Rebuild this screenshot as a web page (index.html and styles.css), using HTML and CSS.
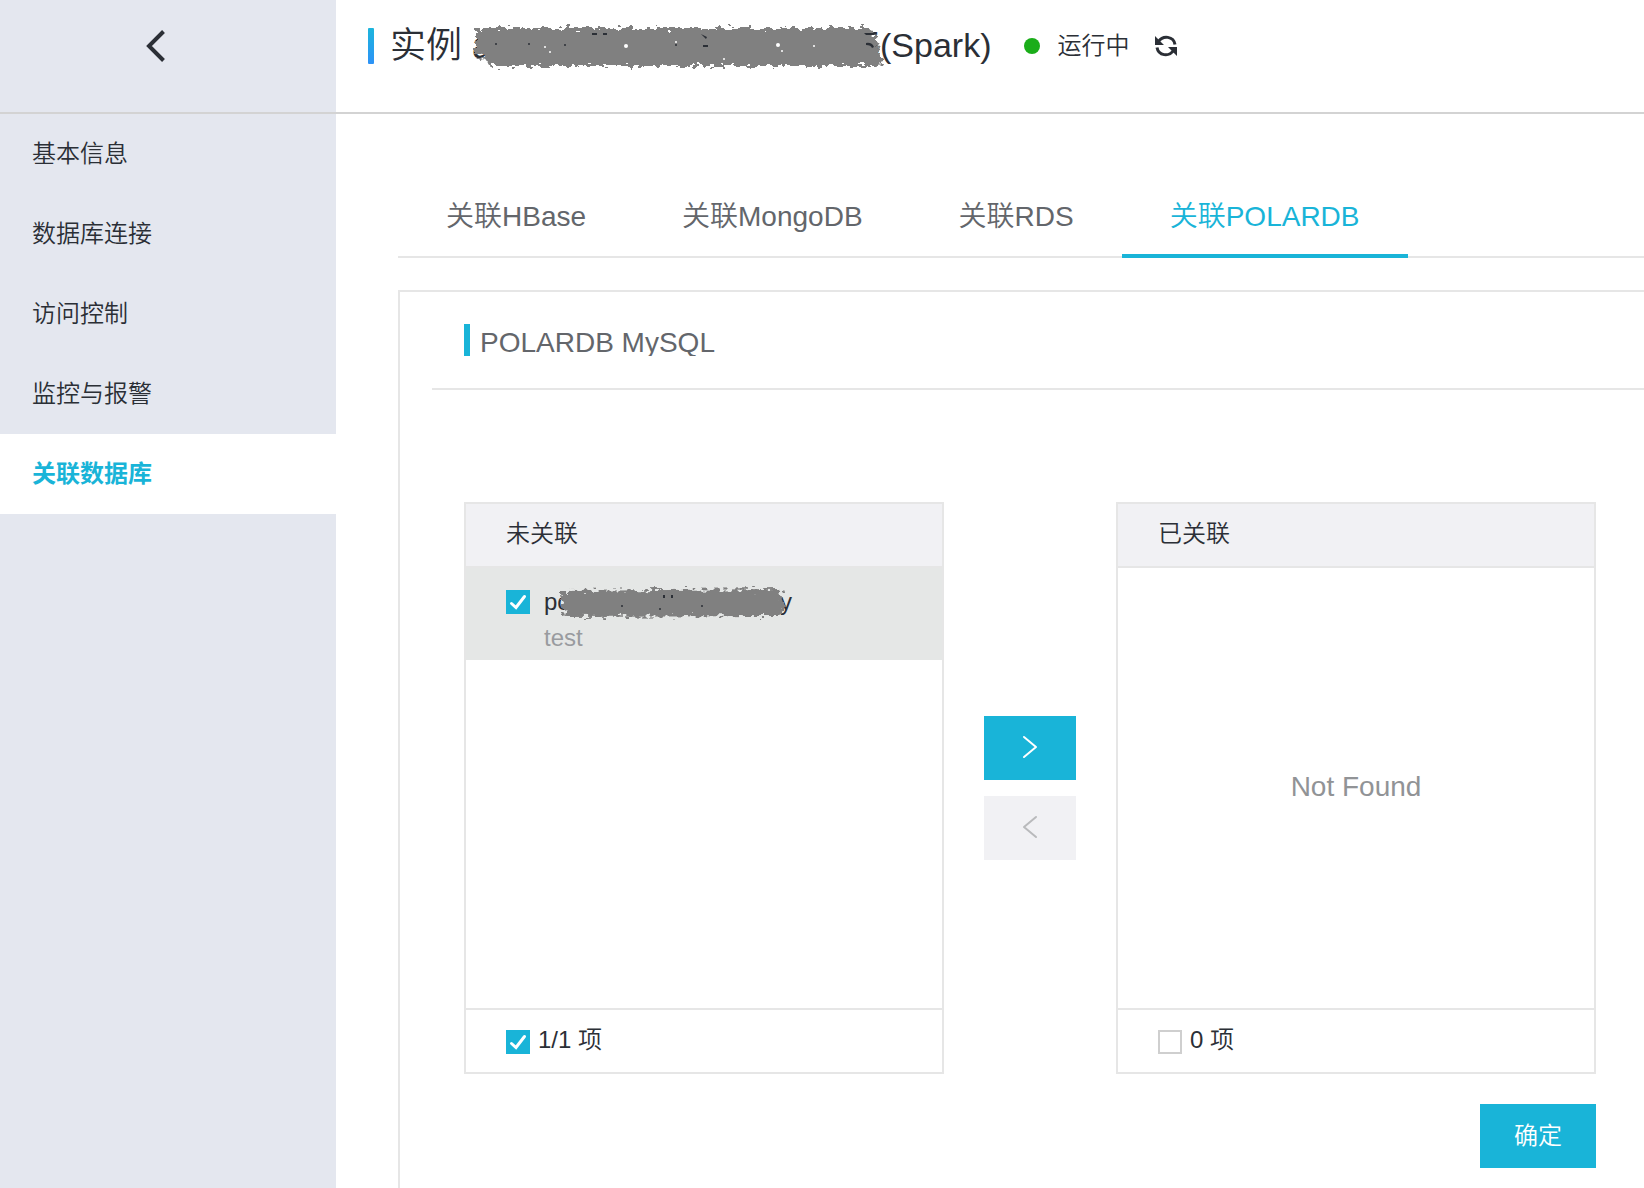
FILE: index.html
```html
<!DOCTYPE html>
<html lang="zh-CN">
<head>
<meta charset="utf-8">
<title>关联数据库</title>
<link rel="stylesheet" href="styles.css">
</head>
<body>
<div class="page">
  <header class="topbar">
    <div class="topbar-back">
      <button class="back" type="button" aria-label="返回">
        <svg width="22" height="34" viewBox="0 0 22 34"><path d="M18.5 2.5 4 17l14.500 14.500" fill="none" stroke="#2b2f36" stroke-width="4"/></svg>
      </button>
    </div>
    <div class="topbar-main">
      <span class="accent"></span>
      <h1 class="title">
        <span>实例</span>
        <span class="masked masked-title">
          <span>a</span><span>5</span>
          <svg class="scribble" viewBox="0 0 416 48" aria-hidden="true">
            <defs>
              <filter id="rough" x="-5%" y="-20%" width="110%" height="140%">
                <feTurbulence type="fractalNoise" baseFrequency="0.16 0.26" numOctaves="2" seed="4" result="noise"/>
                <feDisplacementMap in="SourceGraphic" in2="noise" scale="13" xChannelSelector="R" yChannelSelector="G"/>
              </filter>
            </defs>
            <path filter="url(#rough)" fill="#808080" d="M3 5 398 5 404 16 412 42 404 43 18 43 12 34 3 32Z"/>
            <g fill="#fff"><circle cx="73" cy="24" r="1"/><circle cx="78" cy="29" r="1"/><circle cx="154" cy="23" r="2"/><circle cx="204" cy="19" r="1"/><circle cx="306" cy="22" r="2"/><circle cx="310" cy="28" r="1"/><circle cx="252" cy="36" r="1"/><circle cx="342" cy="23" r="1"/></g>
            <g fill="#2b2f36"><circle cx="24" cy="21" r="1"/><circle cx="57" cy="21" r="1"/><circle cx="93" cy="22" r="1"/><path d="M120 10h5v2h-5zM131 10h4v2h-4zM229 11l6 3-1 2zM231 22h5v2h-5z"/><circle cx="204" cy="22" r="1"/><path d="M392 10h10v2h-8zM394 20q6-1 8 4l-2 1q-1-3-6-3z"/></g>
          </svg>
        </span>
        <span class="engine">(Spark)</span>
      </h1>
      <span class="dot"></span>
      <span class="status">运行中</span>
      <button class="refresh" type="button" aria-label="刷新">
        <svg width="22" height="22" viewBox="0 0 22 22"><g fill="none" stroke="#2b2f36" stroke-width="3"><path d="M3.500 6.500C8 0 18.500 1 20 9.500"/><path d="M18.500 15.500C14 22 3.500 21 2 12.500"/></g><path d="M0 1v9h9zM22 21v-9h-9z" fill="#2b2f36"/></svg>
      </button>
    </div>
  </header>
  <div class="body">
    <nav class="sidebar">
      <a href="#info">基本信息</a>
      <a href="#connection">数据库连接</a>
      <a href="#access">访问控制</a>
      <a href="#monitor">监控与报警</a>
      <a href="#link" class="active" aria-current="page">关联数据库</a>
    </nav>
    <main class="content">
      <div class="tabs" role="tablist">
        <button class="tab" role="tab" type="button">关联HBase</button>
        <button class="tab" role="tab" type="button">关联MongoDB</button>
        <button class="tab" role="tab" type="button">关联RDS</button>
        <button class="tab tab-active" role="tab" type="button" aria-selected="true">关联POLARDB</button>
      </div>
      <section class="panel">
        <div class="panel-head"><h2>POLARDB MySQL</h2></div>
        <div class="transfer">
          <div class="list">
            <div class="list-head">未关联</div>
            <div class="list-body">
              <label class="row">
                <input type="checkbox" checked>
                <span class="row-text">
                  <span class="masked masked-row">
                    <span>po</span><span>y</span>
                    <svg class="scribble" viewBox="0 0 228 34" aria-hidden="true">
                      <path filter="url(#rough)" fill="#808080" d="M3 5 222 3 226 22 222 30 8 31 1 12Z"/>
                      <g fill="#2b2f36"><circle cx="64" cy="20" r="1"/><circle cx="102" cy="23" r="1"/><circle cx="144" cy="20" r="1"/><path d="M105 9h2v3h-2zM113 9h2v3h-2z"/></g>
                    </svg>
                  </span>
                  <span class="row-note">test</span>
                </span>
              </label>
            </div>
            <div class="list-foot"><label><input type="checkbox" checked><span>1/1 项</span></label></div>
          </div>
          <div class="moves">
            <button class="move move-on" type="button" aria-label="添加">
              <svg width="16" height="24" viewBox="0 0 16 24"><path d="M2 2l12 10L2 22" fill="none" stroke="currentColor" stroke-width="2" stroke-linecap="round" stroke-linejoin="round"/></svg>
            </button>
            <button class="move" type="button" aria-label="移除" disabled>
              <svg width="16" height="24" viewBox="0 0 16 24"><path d="M14 2 2 12l12 10" fill="none" stroke="currentColor" stroke-width="2" stroke-linecap="round" stroke-linejoin="round"/></svg>
            </button>
          </div>
          <div class="list">
            <div class="list-head">已关联</div>
            <div class="list-body list-empty">Not Found</div>
            <div class="list-foot"><label><input type="checkbox"><span>0 项</span></label></div>
          </div>
        </div>
        <div class="actions"><button class="confirm" type="button">确定</button></div>
      </section>
    </main>
  </div>
</div>
</body>
</html>
```

FILE: styles.css
```css
* { box-sizing: border-box; }

body {
  margin: 0;
  font-family: "Liberation Sans", "Noto Sans CJK SC", sans-serif;
  font-size: 24px;
  font-weight: 350;
  line-height: 32px;
  color: #2b2f36;
  background: #fff;
}

button {
  padding: 0;
  border: 0;
  background: none;
  font: inherit;
  color: inherit;
}

svg { display: block; }

input[type="checkbox"] {
  appearance: none;
  flex: none;
  width: 24px;
  height: 24px;
  margin: 0;
  border: 2px solid #cfcfcf;
  background: #fff;
}

input[type="checkbox"]:checked {
  border: 0;
  background: #19b4d8 url("data:image/svg+xml,%3Csvg xmlns='http://www.w3.org/2000/svg' viewBox='0 0 24 24'%3E%3Cpath d='M5.500 13.500l4.500 4L18.500 6.500' fill='none' stroke='white' stroke-width='3' stroke-linecap='round'/%3E%3C/svg%3E");
}

.page {
  display: flex;
  flex-direction: column;
  min-height: 100vh;
}

.topbar {
  display: flex;
  height: 114px;
  border-bottom: 2px solid #d3d3d3;
}

.topbar-back {
  flex: 0 0 336px;
  padding: 29px 0 0 145px;
  background: #e4e7ef;
}

.topbar-main {
  display: flex;
  align-items: center;
  height: 92px;
  padding-left: 32px;
}

.accent {
  width: 6px;
  height: 36px;
  margin-right: 16px;
  border-radius: 1px;
  background: linear-gradient(#1cb5dc, #2d92f7);
}

.title {
  display: flex;
  align-items: center;
  gap: 10px;
  margin: 0;
  font-size: 36px;
  font-weight: 350;
  line-height: 48px;
}

.masked {
  position: relative;
  display: flex;
  justify-content: space-between;
}

.masked-title { width: 408px; }

.masked-row { width: 248px; }

.scribble {
  position: absolute;
  overflow: visible;
}

.masked-title .scribble {
  top: 1px;
  left: 0;
  width: 416px;
  height: 48px;
}

.masked-row .scribble {
  top: 0;
  left: 14px;
  width: 228px;
  height: 34px;
}

.engine {
  margin-left: -10px;
  padding-bottom: 2px;
  font-size: 34px;
}

.dot {
  width: 16px;
  height: 16px;
  margin: 0 17px 0 33px;
  border-radius: 50%;
  background: #1aad19;
}

.refresh { margin-left: 26px; }

.body {
  flex: 1;
  display: flex;
}

.sidebar {
  flex: 0 0 336px;
  background: #e4e7ef;
}

.sidebar a {
  display: block;
  padding: 24px 32px;
  color: inherit;
  text-decoration: none;
}

.sidebar .active {
  background: #fff;
  color: #19b4d8;
  font-weight: 700;
}

.content {
  flex: 1;
  display: flex;
  flex-direction: column;
  min-width: 0;
  padding: 64px 0 0 62px;
}

.tabs {
  display: flex;
  height: 80px;
  border-bottom: 2px solid #e6e6e6;
}

.tab {
  height: 80px;
  padding: 2px 48px 0;
  border-bottom: 4px solid transparent;
  font-size: 28px;
  color: #63666b;
}

.tab-active {
  border-color: #19b4d8;
  color: #19b4d8;
}

.panel {
  flex: 1;
  margin-top: 32px;
  padding-left: 32px;
  border: solid #e6e6e6;
  border-width: 2px 0 0 2px;
}

.panel-head {
  padding: 32px;
  border-bottom: 2px solid #e6e6e6;
}

.panel-head h2 {
  height: 32px;
  margin: 0;
  padding-left: 10px;
  border-left: 6px solid #19b4d8;
  font-size: 28px;
  font-weight: 350;
  line-height: 38px;
  overflow: hidden;
  color: #63666b;
}

.transfer {
  display: flex;
  align-items: center;
  padding: 112px 48px 30px 32px;
}

.list {
  flex: 1;
  border: 2px solid #e6e6e6;
}

.list-head {
  padding: 14px 40px 16px;
  background: #f1f1f4;
  border-bottom: 2px solid #e6e6e6;
}

.list-body { height: 440px; }

.list-empty {
  display: flex;
  align-items: center;
  justify-content: center;
  padding-bottom: 2px;
  font-size: 28px;
  color: #919396;
}

.row {
  display: flex;
  gap: 14px;
  height: 92px;
  padding: 18px 40px;
  background: #e5e7e6;
}

.row input[type="checkbox"] { margin-top: 4px; }

.row-note {
  display: block;
  margin-top: 4px;
  color: #999b9f;
}

.list-foot {
  height: 64px;
  padding: 14px 40px 16px;
  border-top: 2px solid #e6e6e6;
}

.list-foot label {
  display: flex;
  gap: 8px;
}

.list-foot input[type="checkbox"] { margin-top: 6px; }

.moves {
  flex: 0 0 172px;
  display: flex;
  flex-direction: column;
  align-items: center;
  gap: 16px;
}

.move {
  display: grid;
  place-items: center;
  width: 92px;
  height: 64px;
  padding-bottom: 2px;
  background: #f1f1f4;
  color: #b9babc;
}

.move-on {
  background: #19b4d8;
  color: #fff;
}

.actions {
  display: flex;
  justify-content: flex-end;
  padding: 0 48px 16px 32px;
}

.confirm {
  height: 64px;
  padding: 0 34px;
  background: #19b4d8;
  color: #fff;
}
```
